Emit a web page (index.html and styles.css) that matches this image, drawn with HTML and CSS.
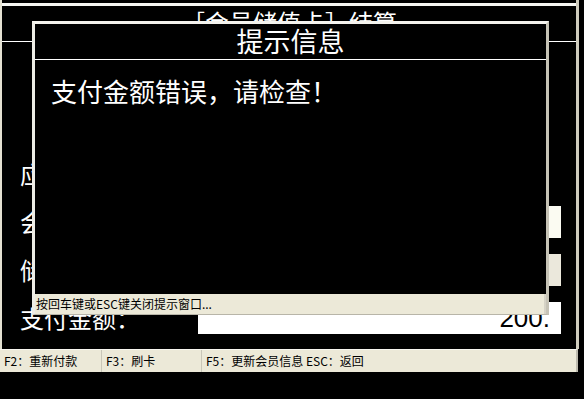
FILE: index.html
```html
<!DOCTYPE html>
<html lang="zh-CN">
<head>
<meta charset="utf-8">
<title>会员储值卡结算</title>
<link rel="stylesheet" href="styles.css">
</head>
<body>
<div class="screen">
  <div class="window">
    <div class="frame">
      <div class="topline"></div>
      <div class="title">［会员储值卡］结算</div>
      <div class="form">
        <div class="row"><span class="label">应收金额：</span><span class="value"></span></div>
        <div class="row"><span class="label">会员余额：</span><span class="box box-cream"></span></div>
        <div class="row"><span class="label">储值支付：</span><span class="box box-beige"></span></div>
        <div class="row"><span class="label">支付金额：</span><span class="box box-white">200.</span></div>
      </div>
    </div>
    <div class="statusbar">
      <span class="panel panel-1">F2：重新付款</span>
      <span class="panel panel-2">F3：刷卡</span>
      <span class="panel panel-3">F5：更新会员信息 ESC：返回</span>
    </div>
  </div>

  <div class="dialog">
    <div class="dlg-title">提示信息</div>
    <div class="dlg-body">支付金额错误，请检查！</div>
    <div class="dlg-foot">按回车键或ESC键关闭提示窗口...</div>
  </div>
</div>
</body>
</html>
```

FILE: styles.css
```css
* { box-sizing: border-box; }

html, body {
  margin: 0;
  padding: 0;
  background: #000;
}

.screen {
  position: relative;
  width: 584px;
  height: 399px;
  background: #000;
  overflow: hidden;
  font-family: "Noto Sans CJK SC", "Noto Sans", sans-serif;
  color: #fff;
}

.window {
  width: 579px;
  display: flex;
  flex-direction: column;
}

.frame {
  height: 349px;
  padding-top: 3px;
  border-left: 2px solid #e4e1d2;
  border-right: 3px solid #cfccbe;
  display: flex;
  flex-direction: column;
}

.topline {
  height: 3px;
  background: #f6f6f2;
}

.title {
  height: 36px;
  padding-top: 2px;
  border-bottom: 1px solid #fff;
  text-align: center;
  font-size: 24px;
  line-height: 28px;
  overflow: hidden;
}

.form {
  padding: 116px 15px 0 18px;
  display: flex;
  flex-direction: column;
  gap: 16px;
}

.row {
  height: 32px;
  display: flex;
  align-items: center;
}

.label {
  flex: 0 0 178px;
  font-size: 24px;
  line-height: 32px;
  white-space: nowrap;
}

.value { flex: 1; }

.box {
  flex: 1;
  height: 32px;
  font-family: "Liberation Sans", Arial, sans-serif;
  font-size: 26px;
  line-height: 32px;
  color: #000;
  text-align: right;
  padding-right: 11px;
}

.box-cream { background: #fbfbf2; }
.box-beige { background: #ebe8dc; }
.box-white { background: #fff; }

.statusbar {
  width: 578px;
  height: 23px;
  background: #ece9d8;
  border-top: 1px solid #f7f6f0;
  border-right: 2px solid #bdbaae;
  display: flex;
  align-items: center;
  font-size: 12px;
  line-height: 22px;
  color: #000;
}

.panel {
  height: 100%;
  padding-left: 4px;
  white-space: nowrap;
}

.panel-1 { width: 102px; border-right: 1px solid #c9c6b8; }
.panel-2 { width: 100px; border-right: 1px solid #c9c6b8; }
.panel-3 { flex: 1; }

.dialog {
  position: absolute;
  left: 32px;
  top: 21px;
  width: 517px;
  height: 294px;
  background: #000;
  border-style: solid;
  border-width: 3px 3px 1px 3px;
  border-color: #f4f3ee #c6c3b6 #b8b5a8 #eeede6;
  display: flex;
  flex-direction: column;
}

.dlg-title {
  height: 36px;
  border-bottom: 1px solid #fff;
  text-align: center;
  font-size: 27px;
  line-height: 34px;
}

.dlg-body {
  flex: 1;
  padding: 16px 16px 0 16px;
  font-size: 26px;
  line-height: 30px;
}

.dlg-foot {
  height: 20px;
  background: #ece9d8;
  border-right: 2px solid #d6d3c6;
  padding-left: 1px;
  font-size: 12px;
  line-height: 20px;
  color: #000;
  white-space: nowrap;
}
```
